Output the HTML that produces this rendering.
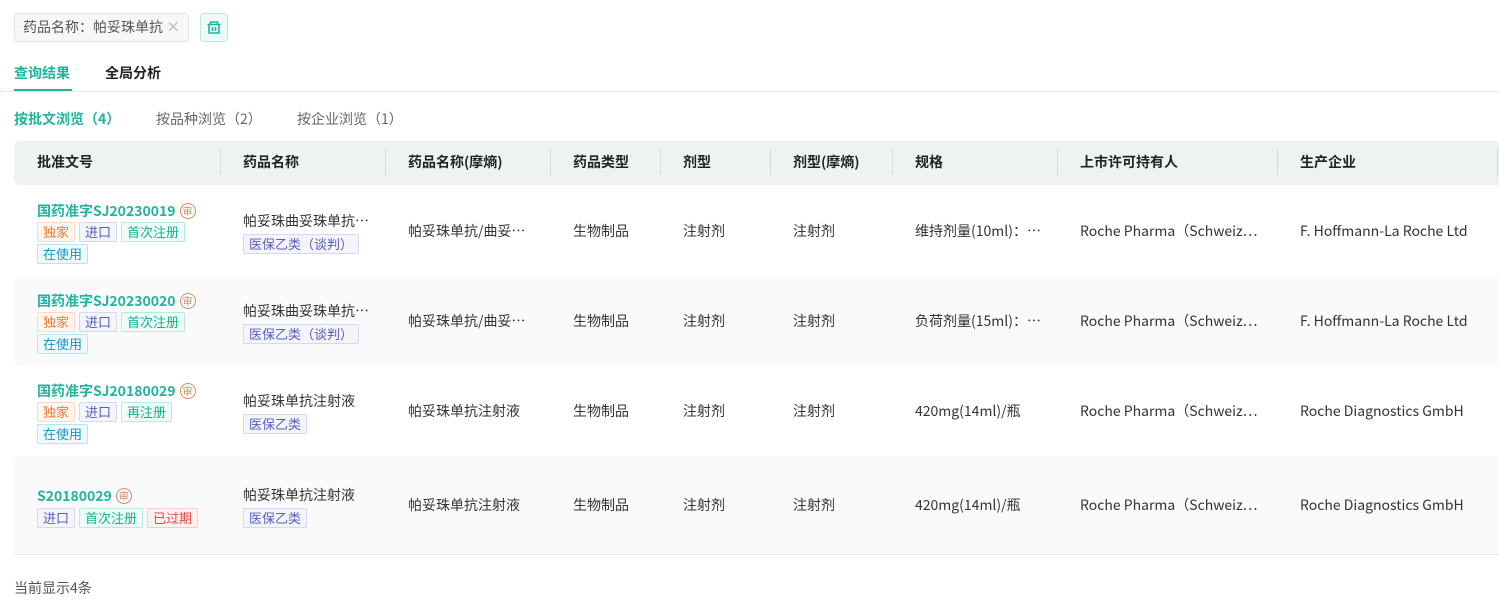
<!DOCTYPE html><html><head><meta charset="utf-8"><style>
*{margin:0;padding:0;box-sizing:border-box}
body{width:1499px;height:609px;background:#fff;font-family:"Noto Sans CJK SC","Liberation Sans",sans-serif;font-size:14px;line-height:20px;color:#333;position:relative;overflow:hidden}
.a{position:absolute;white-space:nowrap}
.tag{display:inline-block;height:20px;line-height:18px;font-size:13px;padding:0 5px;border:1px solid;border-radius:2px;margin-right:4px;vertical-align:top}
.o{color:#f47a2c;background:#fff6ee;border-color:#ffd9bf}
.p{color:#5a5cc0;background:#f4f4fc;border-color:#d6d7f1}
.g{color:#13b48c;background:#effbf6;border-color:#b7ecda}
.c{color:#1896bd;background:#eefaff;border-color:#b6e5f4}
.r{color:#ef4444;background:#fff1f1;border-color:#ffc9c9}
.t{color:#20b3a0;font-weight:bold;font-size:14px}
.sh{display:inline-block;width:16px;height:16px;border:1.3px solid #d98a5f;border-radius:50%;color:#d98a5f;font-size:10px;line-height:13px;text-align:center;vertical-align:1px;margin-left:4px;font-weight:normal}
.h{font-weight:bold;color:#222}
.sep{position:absolute;top:149px;width:1px;height:26px;background:#d5dadb}
</style></head><body>
<div class="a" style="left:14px;top:13px;width:175px;height:29px;border:1px solid #e6e6e6;background:#f7f7f7;border-radius:3px;line-height:27px;padding-left:8px;color:#555">药品名称：帕妥珠单抗 <span style="color:#aaa">×</span></div>
<div class="a" style="left:200px;top:13px;width:28px;height:29px;border:1px solid #bfe8df;background:#eefaf7;border-radius:4px">
<svg width="26" height="27" viewBox="0 0 26 27"><g fill="none" stroke="#20b3a0" stroke-width="1.6"><path d="M6.5 10.5h13M9.5 10.5V8h7v2.5M8 10.5v8.5h10v-8.5M11.5 13v4M14.5 13v4"/></g></svg></div>
<div class="a" style="left:14px;top:63px;color:#20b3a0;font-weight:bold">查询结果</div>
<div class="a" style="left:105px;top:63px;color:#222;font-weight:bold">全局分析</div>
<div class="a" style="left:14px;top:89px;width:58px;height:3px;background:#20b3a0"></div>
<div class="a" style="left:0;top:91px;width:1499px;height:1px;background:#e8e8e8"></div>
<div class="a" style="left:14px;top:109px;color:#20b3a0;font-weight:bold">按批文浏览（4）</div>
<div class="a" style="left:156px;top:109px;color:#666">按品种浏览（2）</div>
<div class="a" style="left:297px;top:109px;color:#666">按企业浏览（1）</div>
<div class="a" style="left:14px;top:141px;width:1485px;height:44px;background:#eff2f3;border-radius:6px 0 0 6px"></div>
<div class="sep" style="left:220px"></div><div class="sep" style="left:385px"></div><div class="sep" style="left:550px"></div><div class="sep" style="left:660px"></div><div class="sep" style="left:770px"></div><div class="sep" style="left:892px"></div><div class="sep" style="left:1057px"></div><div class="sep" style="left:1277px"></div><div class="sep" style="left:1497px"></div>
<div class="a h" style="left:37px;top:152px">批准文号</div><div class="a h" style="left:243px;top:152px">药品名称</div><div class="a h" style="left:408px;top:152px">药品名称(摩熵)</div><div class="a h" style="left:573px;top:152px">药品类型</div><div class="a h" style="left:683px;top:152px">剂型</div><div class="a h" style="left:793px;top:152px">剂型(摩熵)</div><div class="a h" style="left:915px;top:152px">规格</div><div class="a h" style="left:1080px;top:152px">上市许可持有人</div><div class="a h" style="left:1300px;top:152px">生产企业</div>
<div class="a" style="left:14px;top:276px;width:1485px;height:90px;background:#fafafa;border-radius:6px 0 0 6px"></div>
<div class="a" style="left:14px;top:456px;width:1485px;height:98px;background:#fafafa;border-radius:6px 0 0 0"></div>
<div class="a" style="left:14px;top:554px;width:1485px;height:1px;background:#e8e8ee"></div>

<div class="a" style="left:37px;top:201px"><span class="t">国药准字SJ20230019</span><span class="sh">审</span></div>
<div class="a" style="left:37px;top:222px"><span class="tag o">独家</span><span class="tag p">进口</span><span class="tag g">首次注册</span></div>
<div class="a" style="left:37px;top:244px"><span class="tag c">在使用</span></div>
<div class="a" style="left:243px;top:211px">帕妥珠曲妥珠单抗…</div>
<div class="a" style="left:243px;top:234px"><span class="tag p">医保乙类（谈判）</span></div>

<div class="a" style="left:37px;top:291px"><span class="t">国药准字SJ20230020</span><span class="sh">审</span></div>
<div class="a" style="left:37px;top:312px"><span class="tag o">独家</span><span class="tag p">进口</span><span class="tag g">首次注册</span></div>
<div class="a" style="left:37px;top:334px"><span class="tag c">在使用</span></div>
<div class="a" style="left:243px;top:301px">帕妥珠曲妥珠单抗…</div>
<div class="a" style="left:243px;top:324px"><span class="tag p">医保乙类（谈判）</span></div>

<div class="a" style="left:37px;top:381px"><span class="t">国药准字SJ20180029</span><span class="sh">审</span></div>
<div class="a" style="left:37px;top:402px"><span class="tag o">独家</span><span class="tag p">进口</span><span class="tag g">再注册</span></div>
<div class="a" style="left:37px;top:424px"><span class="tag c">在使用</span></div>
<div class="a" style="left:243px;top:391px">帕妥珠单抗注射液</div>
<div class="a" style="left:243px;top:414px"><span class="tag p">医保乙类</span></div>

<div class="a" style="left:37px;top:486px"><span class="t">S20180029</span><span class="sh">审</span></div>
<div class="a" style="left:37px;top:508px"><span class="tag p">进口</span><span class="tag g">首次注册</span><span class="tag r">已过期</span></div>
<div class="a" style="left:243px;top:485px">帕妥珠单抗注射液</div>
<div class="a" style="left:243px;top:508px"><span class="tag p">医保乙类</span></div>

<div class="a" style="left:408px;top:221px">帕妥珠单抗/曲妥…</div><div class="a" style="left:573px;top:221px">生物制品</div><div class="a" style="left:683px;top:221px">注射剂</div><div class="a" style="left:793px;top:221px">注射剂</div><div class="a" style="left:915px;top:221px">维持剂量(10ml)：…</div><div class="a" style="left:1080px;top:221px">Roche Pharma（Schweiz…</div><div class="a" style="left:1300px;top:221px">F. Hoffmann-La Roche Ltd</div>
<div class="a" style="left:408px;top:311px">帕妥珠单抗/曲妥…</div><div class="a" style="left:573px;top:311px">生物制品</div><div class="a" style="left:683px;top:311px">注射剂</div><div class="a" style="left:793px;top:311px">注射剂</div><div class="a" style="left:915px;top:311px">负荷剂量(15ml)：…</div><div class="a" style="left:1080px;top:311px">Roche Pharma（Schweiz…</div><div class="a" style="left:1300px;top:311px">F. Hoffmann-La Roche Ltd</div>
<div class="a" style="left:408px;top:401px">帕妥珠单抗注射液</div><div class="a" style="left:573px;top:401px">生物制品</div><div class="a" style="left:683px;top:401px">注射剂</div><div class="a" style="left:793px;top:401px">注射剂</div><div class="a" style="left:915px;top:401px">420mg(14ml)/瓶</div><div class="a" style="left:1080px;top:401px">Roche Pharma（Schweiz…</div><div class="a" style="left:1300px;top:401px">Roche Diagnostics GmbH</div>
<div class="a" style="left:408px;top:495px">帕妥珠单抗注射液</div><div class="a" style="left:573px;top:495px">生物制品</div><div class="a" style="left:683px;top:495px">注射剂</div><div class="a" style="left:793px;top:495px">注射剂</div><div class="a" style="left:915px;top:495px">420mg(14ml)/瓶</div><div class="a" style="left:1080px;top:495px">Roche Pharma（Schweiz…</div><div class="a" style="left:1300px;top:495px">Roche Diagnostics GmbH</div>

<div class="a" style="left:14px;top:578px;color:#555">当前显示4条</div>
</body></html>
